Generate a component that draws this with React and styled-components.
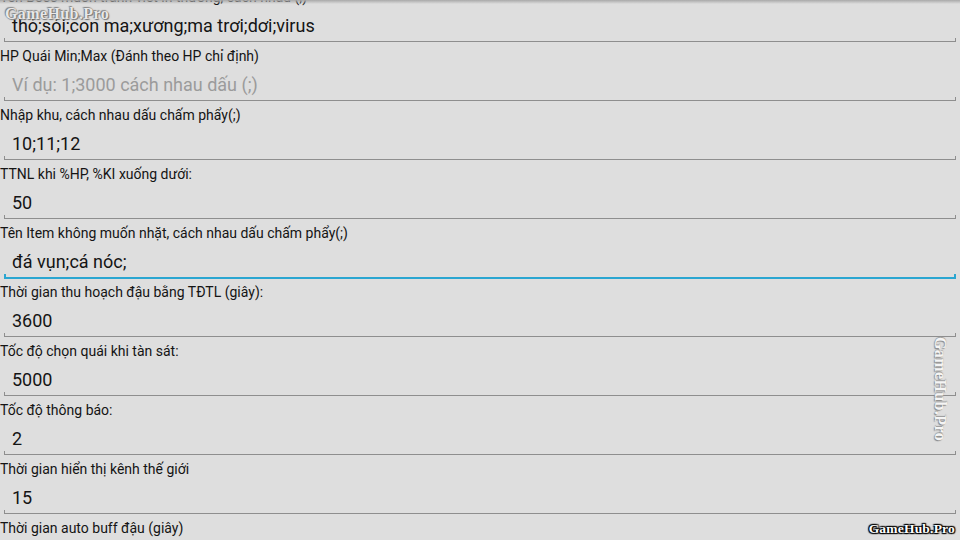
import React from 'react';
import styled, { createGlobalStyle } from 'styled-components';

const GlobalStyle = createGlobalStyle`
  html, body {
    margin: 0;
    padding: 0;
    background: #dedede;
    overflow: hidden;
  }
  body {
    font-family: Roboto, "Noto Sans", sans-serif;
  }
`;

const Screen = styled.div`
  width: 960px;
  height: 540px;
  overflow: hidden;
  position: relative;
  background: #dedede;
`;

const TopShadow = styled.div`
  position: absolute;
  top: 0;
  left: 0;
  right: 0;
  height: 4px;
  background: linear-gradient(#a9a9a9, rgba(222, 222, 222, 0));
  z-index: 2;
`;

const Form = styled.div`
  display: flex;
  flex-direction: column;
  margin-top: -13px;
`;

const Row = styled.div`
  display: flex;
  flex-direction: column;
  height: 59px;
`;

const Label = styled.div`
  font-size: 14px;
  line-height: 20px;
  color: #141414;
  white-space: nowrap;
`;

const Field = styled.div`
  display: flex;
  flex-direction: column;
  padding: 0 4px;
`;

const Value = styled.div`
  font-size: 18px;
  line-height: 20px;
  height: 20px;
  padding: 9px 0 0 8px;
  color: ${p => (p.$hint ? '#9b9b9b' : '#141414')};
  white-space: nowrap;
`;

const Underline = styled.div`
  height: 3px;
  margin-top: ${p => (p.$focused ? '2px' : '2px')};
  border: 0 solid ${p => (p.$focused ? '#2ba6d1' : '#8e8e8e')};
  border-width: ${p => (p.$focused ? '0 2px 2px 2px' : '0 1px 1px 1px')};
`;

const Mark = styled.div`
  position: absolute;
  font-family: "Liberation Serif", "DejaVu Serif", serif;
  font-weight: bold;
  color: #ffffff;
  z-index: 3;
  white-space: nowrap;
  letter-spacing: 0.4px;
`;

const TopMark = styled(Mark)`
  left: 5px;
  top: 5px;
  font-size: 16px;
  color: rgba(255, 255, 255, 0.85);
  text-shadow: 0 0 1px #666, 1px 1px 1px #777, -1px -1px 1px #888;
`;

const SideMark = styled(Mark)`
  left: 888px;
  top: 380px;
  font-size: 16px;
  transform: rotate(90deg);
  transform-origin: center;
  color: rgba(255, 255, 255, 0.92);
  text-shadow: 1px 1px 1px #8a8a8a, -1px 0 1px #9a9a9a;
`;

const BottomMark = styled(Mark)`
  right: 5px;
  bottom: 3px;
  font-size: 13.5px;
  letter-spacing: 0.2px;
  text-shadow: 0 0 2px #000, 1px 1px 1px #000, -1px -1px 1px #000, 1px -1px 1px #000, -1px 1px 1px #000;
`;

const rows = [
  { label: 'Tên Boss muốn tránh viết in thường, cách nhau (;)', value: 'thỏ;sói;con ma;xương;ma trơi;dơi;virus' },
  { label: 'HP Quái Min;Max (Đánh theo HP chỉ định)', value: 'Ví dụ: 1;3000 cách nhau dấu (;)', hint: true },
  { label: 'Nhập khu, cách nhau dấu chấm phẩy(;)', value: '10;11;12' },
  { label: 'TTNL khi %HP, %KI xuống dưới:', value: '50' },
  { label: 'Tên Item không muốn nhặt, cách nhau dấu chấm phẩy(;)', value: 'đá vụn;cá nóc;', focused: true },
  { label: 'Thời gian thu hoạch đậu bằng TĐTL (giây):', value: '3600' },
  { label: 'Tốc độ chọn quái khi tàn sát:', value: '5000' },
  { label: 'Tốc độ thông báo:', value: '2' },
  { label: 'Thời gian hiển thị kênh thế giới', value: '15' },
  { label: 'Thời gian auto buff đậu (giây)', value: '' },
];

export default function App() {
  return (
    <Screen>
      <GlobalStyle />
      <TopShadow />
      <Form>
        {rows.map((r, i) => (
          <Row key={i}>
            <Label>{r.label}</Label>
            <Field>
              <Value $hint={r.hint}>{r.value}</Value>
              <Underline $focused={r.focused} />
            </Field>
          </Row>
        ))}
      </Form>
      <TopMark>GameHub.Pro</TopMark>
      <SideMark>GameHub.Pro</SideMark>
      <BottomMark>GameHub.Pro</BottomMark>
    </Screen>
  );
}
